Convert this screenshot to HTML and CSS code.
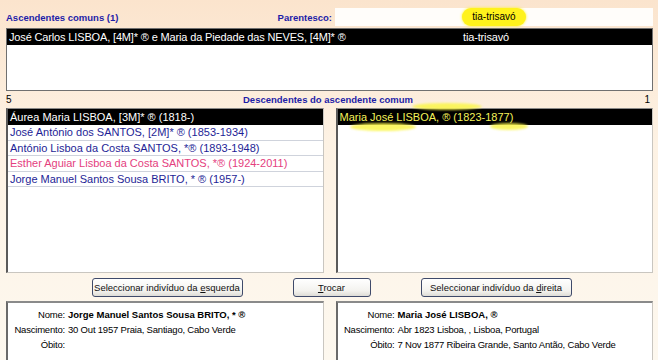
FILE: index.html
```html
<!DOCTYPE html>
<html lang="pt">
<head>
  <meta charset="UTF-8"/>
  <title>Parentesco</title>
  <link rel="stylesheet" href="styles.css">
</head>
<body>

  <div class="top">
    <span class="caption grow">Ascendentes comuns (1)</span>
    <span class="caption">Parentesco:</span>
    <div class="field"><span class="marker">tia-trisavó</span></div>
  </div>

  <div class="ascbox">
    <div class="row sel asc">
      <span>José Carlos LISBOA, [4M]* ® e Maria da Piedade das NEVES, [4M]* ®</span>
      <span>tia-trisavó</span>
    </div>
  </div>

  <div class="midrow">
    <span class="count">5</span>
    <span class="caption">Descendentes do ascendente comum</span>
    <span class="count">1</span>
  </div>

  <div class="lists">
    <div class="listbox">
      <div class="row sel">Áurea Maria LISBOA, [3M]* ® (1818-)</div>
      <div class="row">José António dos SANTOS, [2M]* ® (1853-1934)</div>
      <div class="row">António Lisboa da Costa SANTOS, *® (1893-1948)</div>
      <div class="row pink">Esther Aguiar Lisboa da Costa SANTOS, *® (1924-2011)</div>
      <div class="row">Jorge Manuel Santos Sousa BRITO, * ® (1957-)</div>
    </div>
    <div class="listbox">
      <span class="stroke s1"></span>
      <span class="stroke s2"></span>
      <span class="stroke s3"></span>
      <div class="row sel yellow">Maria José LISBOA, ® (1823-1877)</div>
    </div>
  </div>

  <div class="buttons">
    <button class="btn w150">Seleccionar indivíduo da <u>e</u>squerda</button>
    <button class="btn w78"><u>T</u>rocar</button>
    <button class="btn w150">Seleccionar indivíduo da <u>d</u>ireita</button>
  </div>

  <div class="info">
    <div class="infobox">
      <div class="line"><span class="lbl">Nome:</span><b>Jorge Manuel Santos Sousa BRITO, * ®</b></div>
      <div class="line"><span class="lbl">Nascimento:</span>30 Out 1957 Praia, Santiago, Cabo Verde</div>
      <div class="line"><span class="lbl">Óbito:</span></div>
    </div>
    <div class="infobox">
      <div class="line"><span class="lbl">Nome:</span><b>Maria José LISBOA, ®</b></div>
      <div class="line"><span class="lbl">Nascimento:</span>Abr 1823 Lisboa, , Lisboa, Portugal</div>
      <div class="line"><span class="lbl">Óbito:</span>7 Nov 1877 Ribeira Grande, Santo Antão, Cabo Verde</div>
    </div>
  </div>

</body>
</html>
```

FILE: styles.css
```css
/* --- Reset & Body --- */
* { box-sizing: border-box; margin: 0; padding: 0; }
html, body { width: 100%; height: 100%; overflow: hidden; }
body {
  background: linear-gradient(#fbe4cd, #fdf2e4 40%, #fdf8ef);
  font-family: "Liberation Sans", Arial, sans-serif;
  font-size: 11px;
  color: #000;
  padding: 8px 5px 0 6px;
}

.caption { color: #1d1da8; font-weight: bold; font-size: 9.5px; }
.grow { flex: 1; }

/* --- Top: common ancestors + relationship --- */
.top {
  display: flex; align-items: center;
  height: 18px;
}
.field {
  width: 318px; height: 18px;
  margin-left: 3px;
  background: #fffdfa;
  display: flex; justify-content: center; align-items: center;
  font-size: 10px;
}
.marker {
  background: #fff21c;
  border-radius: 9px;
  padding: 3px 10px 4px;
  box-shadow: 0 0 3px #fff21c;
}

.ascbox {
  margin-top: 2px;
  height: 63px;
  background: #fff;
  border: 1px solid #707070;
}
.row {
  height: 16px;
  display: flex; align-items: center;
  padding-left: 2px;
  white-space: nowrap;
}
.row.sel { background: #000; color: #fff; }
.ascbox .row { font-size: 11px; letter-spacing: -0.15px; }
.row.asc span:first-child { width: 454px; }

/* --- Descendants --- */
.midrow {
  display: flex; justify-content: space-between; align-items: center;
  height: 17px;
  padding-right: 3px;
}
.count { font-size: 10px; width: 20px; }
.count:last-child { text-align: right; }

.lists {
  display: grid; grid-template-columns: 1fr 1fr;
  column-gap: 12px;
  height: 165px;
}
.listbox {
  position: relative;
  background: #fff;
  border: 1px solid #c9c6c0;
  border-left: 2px solid #5a5a5a;
  border-top: 1px solid #8a8a8a;
}
.listbox .row {
  color: #1e1e96;
  height: 15.5px;
  border-bottom: 1px solid #cfd3dc;
}
.listbox .row.sel { color: #fff; height: 16px; border-bottom: 0; }
.listbox .row.pink { color: #e4407e; }
.listbox .row.yellow { color: #f4f25a; }

/* yellow highlighter strokes over the right list */
.stroke {
  position: absolute;
  background: #fbf64a;
  border-radius: 50%;
  filter: blur(1px);
  opacity: 0.85;
}
.s1 { left: 74px; top: -6px; width: 70px; height: 7px; }
.s2 { left: 12px; top: 14px; width: 66px; height: 8px; }
.s3 { left: 152px; top: 14px; width: 38px; height: 7px; }

/* --- Buttons --- */
.buttons {
  display: flex; justify-content: center; align-items: center;
  gap: 50px;
  height: 28px;
  padding-left: 4px;
}
.btn {
  height: 19px;
  padding: 0;
  white-space: nowrap;
  font-family: "Liberation Sans", Arial, sans-serif;
  font-size: 9.5px;
  color: #111;
  background: linear-gradient(#ffffff, #f3f2ee 70%, #dedcd6);
  border: 1px solid #3f4a6a;
  border-radius: 3px;
}
.w150 { width: 151px; }
.w78 { width: 78px; }
.btn u { text-decoration: underline; }

/* --- Person details --- */
.info {
  display: grid; grid-template-columns: 1fr 1fr;
  column-gap: 12px;
  height: 62px;
}
.infobox {
  background: #fff;
  border: 1px solid #c9c6c0;
  border-left: 2px solid #6a6a6a;
  border-top: 2px solid #8a8a8a;
  padding-top: 4px;
  font-size: 9.5px;
  letter-spacing: -0.2px;
}
.line { height: 15px; display: flex; align-items: center; white-space: nowrap; }
.lbl { width: 60px; text-align: right; padding-right: 3px; flex: none; }
.line b { font-weight: bold; font-size: 9.5px; letter-spacing: 0; }
```
